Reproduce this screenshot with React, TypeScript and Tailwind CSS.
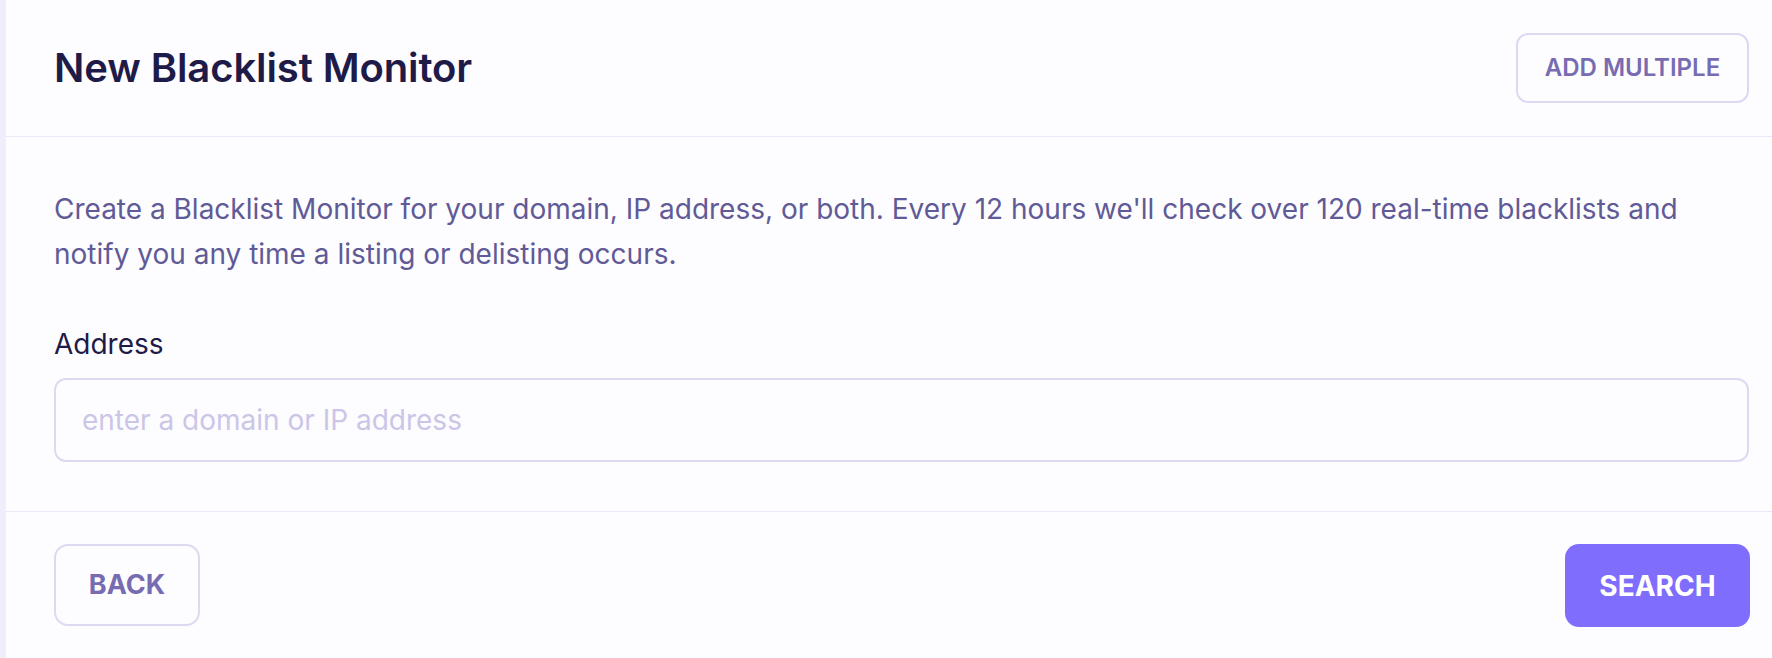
export default function App() {
  return (
    <div className="flex h-[658px] w-full overflow-hidden bg-[#fdfcff] font-['Inter',sans-serif]">
      <div className="w-[6px] shrink-0 bg-[#f1eefc]" />
      <div className="flex min-w-0 flex-1 flex-col">
        <header className="flex h-[137px] shrink-0 items-center justify-between border-b border-[#ebe8fa] pl-[48px] pr-[23px]">
          <h1 className="text-[40px] font-semibold leading-none tracking-[-0.1px] text-[#1f1b48]">
            New Blacklist Monitor
          </h1>
          <button className="h-[70px] w-[233px] rounded-[12px] border-2 border-[#ddd9f2] text-[24px] font-semibold text-[#776cb1]">
            ADD MULTIPLE
          </button>
        </header>

        <section className="flex shrink-0 flex-col border-b border-[#ebe8fa] pb-[49px] pl-[48px] pr-[23px] pt-[50px]">
          <p className="text-[28px] leading-[45px] text-[#605a96]">
            Create a Blacklist Monitor for your domain, IP address, or both. Every 12 hours we'll check over 120 real-time
            blacklists and notify you any time a listing or delisting occurs.
          </p>
          <label className="mt-[49px] text-[28px] leading-[36px] text-[#1f1b48]">Address</label>
          <input
            type="text"
            placeholder="enter a domain or IP address"
            className="mt-[16px] h-[84px] w-full rounded-[12px] border-2 border-[#ddd9f2] bg-[#fdfcff] px-[26px] text-[28px] text-[#1f1b48] outline-none placeholder:text-[#cbc6e7]"
          />
        </section>

        <footer className="flex flex-1 items-start justify-between pl-[48px] pr-[22px] pt-[32px]">
          <button className="h-[82px] w-[146px] rounded-[14px] border-2 border-[#ddd9f2] text-[27px] font-bold text-[#776cb1]">
            BACK
          </button>
          <button className="h-[83px] w-[185px] rounded-[14px] bg-[#7f6dfe] text-[28px] font-bold text-white">
            SEARCH
          </button>
        </footer>
      </div>
    </div>
  )
}
